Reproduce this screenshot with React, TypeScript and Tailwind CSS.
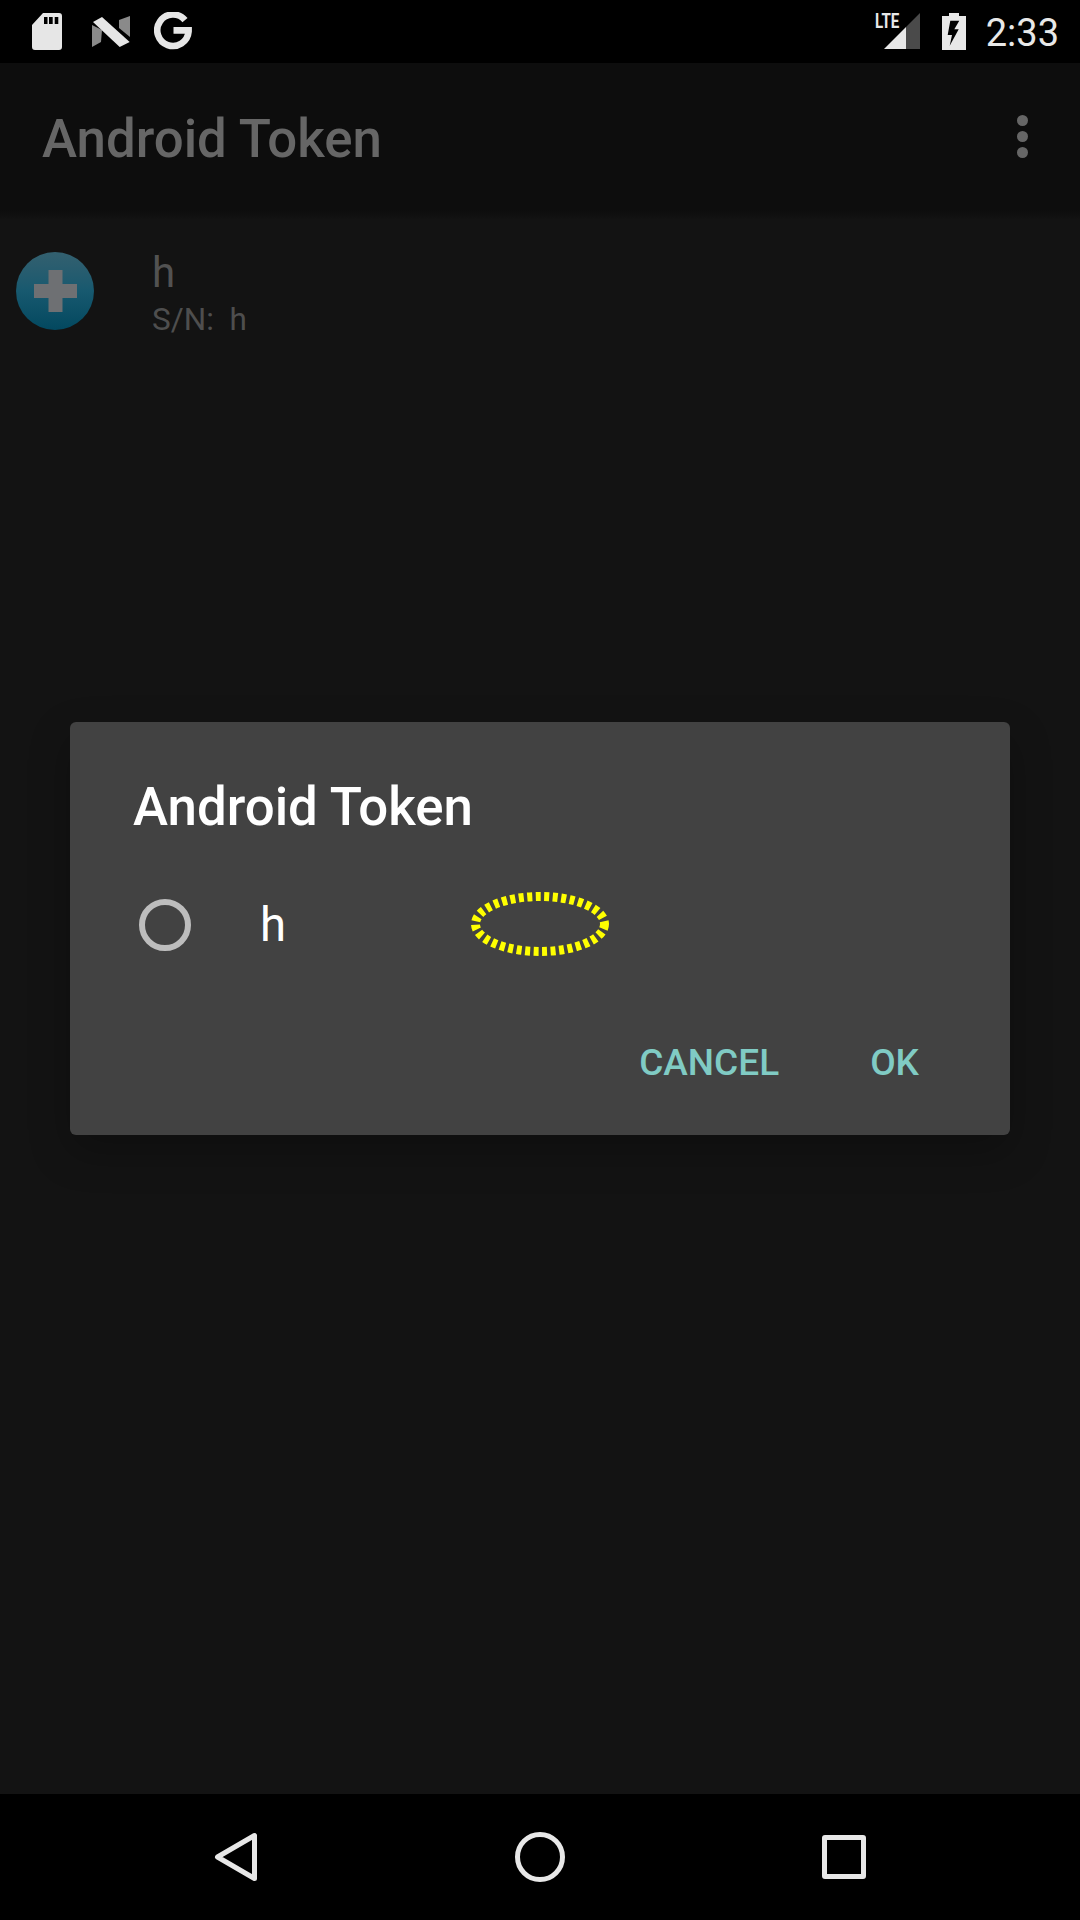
const font = { fontFamily: 'Roboto, sans-serif' };

function SdCard() {
  return (
    <svg width="30" height="37" viewBox="0 0 30 37" className="block">
      <path fill="#e6e6e6" fillRule="evenodd" d="M11 0H27a3 3 0 0 1 3 3V34a3 3 0 0 1-3 3H3a3 3 0 0 1-3-3V12ZM12 4v7h3.500V4ZM17 4v7h3.700V4ZM22.700 4v7h3.600V4Z" />
    </svg>
  );
}

function NLogo() {
  return (
    <svg width="38" height="32" viewBox="0 0 38 32" className="block">
      <path fill="#8a8a8a" d="M0 9L10 14L9 26L0 31Z" />
      <path fill="#8a8a8a" d="M27 4L38 0V21L27 12Z" />
      <path fill="#e6e6e6" d="M1 6L10 1L37.700 26L27.700 31Z" />
    </svg>
  );
}

function GLogo() {
  return (
    <svg width="38" height="38" viewBox="0 0 38 38" className="block">
      <path fill="none" stroke="#e6e6e6" strokeWidth="6.600" d="M31 8.200A15.700 15.700 0 1 0 34.600 19.500V18.400H19.500" />
    </svg>
  );
}

function Signal() {
  return (
    <svg width="37" height="37" viewBox="0 0 37 37" className="block">
      <path fill="#e8e8e8" d="M0 36L22 14V36Z" />
      <path fill="#4a4a4a" d="M22 14L36 0V36H22Z" />
    </svg>
  );
}

function Battery() {
  return (
    <svg width="24" height="37" viewBox="0 0 24 37" className="block">
      <path fill="#e8e8e8" fillRule="evenodd" d="M7 0H17V3H24V37H0V3H7ZM8.300 7.700L5.700 22H10L7.700 32.700L16.700 16.300H12.300L17.300 7.700Z" />
    </svg>
  );
}

function AddIcon() {
  return (
    <div className="flex h-[78px] w-[78px] items-center justify-center rounded-full bg-gradient-to-b from-[#33606f] via-[#17596f] to-[#03485f]">
      <svg width="43" height="42" viewBox="0 0 43 42" className="block">
        <path fill="#6e7073" d="M14.500 0H28.500V14H43V28H28.500V42H14.500V28H0V14H14.500Z" />
      </svg>
    </div>
  );
}

function NavBar() {
  return (
    <div className="relative flex h-[126px] shrink-0 items-start bg-black pt-[38px]">
      <div className="ml-[214px] h-[50px] w-[44px]">
        <svg width="44" height="50" viewBox="0 0 44 50" className="block">
          <path fill="none" stroke="#e8e8e8" strokeWidth="5" strokeLinejoin="round" d="M40.500 3.500V46.500L3.500 25Z" />
        </svg>
      </div>
      <div className="ml-[257px] h-[50px] w-[50px] rounded-full border-[5px] border-[#e8e8e8]" />
      <div className="ml-[257px] mt-[3px] h-[44px] w-[44px] rounded-[3px] border-[5px] border-[#e8e8e8]" />
    </div>
  );
}

export default function App() {
  return (
    <div className="relative flex h-[1920px] w-[1080px] flex-col overflow-hidden bg-[#131313]" style={font}>
      <div className="flex h-[63px] shrink-0 items-start justify-between bg-black">
        <div className="flex items-start">
          <div className="ml-[32px] mt-[13px]"><SdCard /></div>
          <div className="ml-[30px] mt-[16px]"><NLogo /></div>
          <div className="ml-[24px] mt-[12px]"><GLogo /></div>
        </div>
        <div className="relative flex items-start">
          <span className="absolute left-[-9px] top-[9px] origin-left scale-x-[0.72] text-[21px] font-bold leading-[24px] text-[#e8e8e8]">LTE</span>
          <div className="mt-[13px]"><Signal /></div>
          <div className="ml-[21px] mt-[13px]"><Battery /></div>
          <span className="ml-[20px] mr-[21px] mt-[11px] text-[38px] leading-[44px] text-[#e8e8e8]">2:33</span>
        </div>
      </div>

      <div className="flex h-[147px] shrink-0 items-center justify-between bg-[#0d0d0d] pl-[42px] pr-[52px]">
        <span className="mt-[4px] text-[52.800px] font-medium leading-[60px] text-[#666666]">Android Token</span>
        <div className="flex flex-col gap-[5px]">
          <div className="h-[11px] w-[11px] rounded-full bg-[#666666]" />
          <div className="h-[11px] w-[11px] rounded-full bg-[#666666]" />
          <div className="h-[11px] w-[11px] rounded-full bg-[#666666]" />
        </div>
      </div>

      <div className="flex-1 bg-[#131313]">
        <div className="h-[10px] bg-gradient-to-b from-[#0d0d0d] to-[#131313]" />
        <div className="flex items-start pl-[16px] pt-[32px]">
          <AddIcon />
          <div className="ml-[58px] mt-[-4px] flex flex-col">
            <span className="text-[42px] leading-[50px] text-[#525252]">h</span>
            <span className="text-[31.500px] leading-[43px] text-[#4e4e4e]">S/N:&nbsp; h</span>
          </div>
        </div>
      </div>

      <NavBar />

      <div className="absolute inset-x-0 bottom-[126px] top-[63px] flex items-center justify-center">
        <div className="relative h-[413px] w-[940px] rounded-[6px] bg-[#424242] shadow-[0_16px_40px_rgba(0,0,0,0.25)]">
          <div className="pl-[63px] pt-[53px] text-[52.800px] font-medium leading-[64px] text-white">Android Token</div>
          <div className="mt-[56px] flex h-[60px] items-center pl-[69px]">
            <div className="h-[52px] w-[52px] rounded-full border-[6px] border-[#bdbdbd]" />
            <span className="ml-[69px] text-[47.250px] leading-[60px] text-white">h</span>
          </div>
          <div className="mt-[86px] flex justify-end gap-[91px] pr-[91px]">
            <span className="text-[37px] font-medium leading-[44px] text-[#80cbc4]">CANCEL</span>
            <span className="text-[37px] font-medium leading-[44px] text-[#80cbc4]">OK</span>
          </div>
          <svg width="140" height="66" viewBox="0 0 140 66" className="absolute left-[400px] top-[169px]">
            <ellipse cx="70" cy="33" rx="64.500" ry="27.500" fill="none" stroke="#ffff00" strokeWidth="9" strokeDasharray="5 3.500" />
          </svg>
        </div>
      </div>
    </div>
  );
}
